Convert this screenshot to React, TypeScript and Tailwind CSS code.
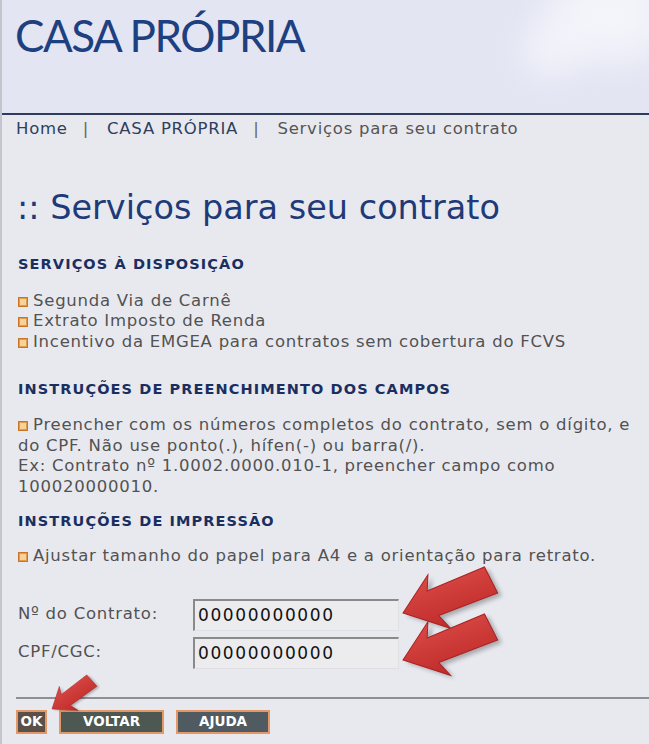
import React from "react";

function Bullet() {
  return (
    <span className="inline-block w-[10px] h-[10px] mr-[5px] align-[-1px] relative bg-[#e39a45] border border-[#c9762a]">
      <span className="absolute left-[1px] top-[1px] w-[3px] h-[3px] bg-[#f6d39c]" />
      <span className="absolute right-[1px] top-[1px] w-[3px] h-[3px] bg-[#f6d39c]" />
      <span className="absolute left-[1px] bottom-[1px] w-[3px] h-[3px] bg-[#f6d39c]" />
      <span className="absolute right-[1px] bottom-[1px] w-[3px] h-[3px] bg-[#f6d39c]" />
    </span>
  );
}

function Arrow({ x, y, angle, scale = 1 }: { x: number; y: number; angle: number; scale?: number }) {
  const pts = "0,0 36,-28 30,-13 92,-17 96,12 33,14 40,30";
  return (
    <g transform={`translate(${x} ${y}) rotate(${angle}) scale(${scale})`}>
      <polygon points={pts} fill="#000" opacity="0.28" transform="translate(3 4)" filter="url(#blur)" />
      <polygon points={pts} fill="url(#redgrad)" stroke="#a92222" strokeWidth="1" />
    </g>
  );
}

const h2 = "text-[14.5px] leading-[18px] font-bold tracking-[1.1px] text-[#1a2f60]";

export default function App() {
  return (
    <div className="relative w-[649px] h-[744px] overflow-hidden bg-[#e8e9ef] border-l-2 border-[#c4c6ce] font-['DejaVu_Sans',sans-serif]">
      {/* header */}
      <div className="relative h-[113px] bg-[#e3e5f3] overflow-hidden">
        <div className="absolute right-[-20px] top-[-30px] w-[120px] h-[90px] rounded-full bg-white opacity-60 blur-[18px]" />
        <div className="absolute right-[70px] top-[20px] w-[60px] h-[60px] rounded-full bg-white opacity-40 blur-[14px]" />
        <div className="relative pl-[13px] pt-[10px] font-['Lato',sans-serif] text-[44px] leading-[50px] text-[#1e3f80] tracking-[-1.5px]">
          CASA PRÓPRIA
        </div>
      </div>
      <div className="h-[2px] bg-[#2f3c5e]" />

      <div className="text-[16.5px] leading-[20.5px] tracking-[0.75px] text-[#525252]">
        {/* breadcrumb */}
        <div className="pl-[14px] pt-[4px] flex text-[#2f3f5e]">
          <span>Home</span>
          <span className="ml-[15px] mr-[18px] text-[#666]">|</span>
          <span>CASA PRÓPRIA</span>
          <span className="ml-[15px] mr-[18px] text-[#666]">|</span>
          <span className="text-[#555]">Serviços para seu contrato</span>
        </div>
        {/* title */}
        <h1 className="pl-[15px] mt-[49px] text-[33.5px] leading-[38px] tracking-normal text-[#1e3a78]">:: Serviços para seu contrato</h1>

        <div className="pl-[16px] pr-[14px]">
          <h2 className={`mt-[28px] ${h2}`}>SERVIÇOS À DISPOSIÇÃO</h2>
          <div className="mt-[18px]">
            <div><Bullet />Segunda Via de Carnê</div>
            <div><Bullet />Extrato Imposto de Renda</div>
            <div><Bullet />Incentivo da EMGEA para contratos sem cobertura do FCVS</div>
          </div>

          <h2 className={`mt-[28px] ${h2}`}>INSTRUÇÕES DE PREENCHIMENTO DOS CAMPOS</h2>
          <p className="mt-[17px]">
            <Bullet />Preencher com os números completos do contrato, sem o dígito, e do CPF. Não use ponto(.), hífen(-) ou barra(/).
            <br />
            Ex: Contrato nº 1.0002.0000.010-1, preencher campo como 100020000010.
          </p>

          <h2 className={`mt-[15px] ${h2}`}>INSTRUÇÕES DE IMPRESSÃO</h2>
          <p className="mt-[16px]"><Bullet />Ajustar tamanho do papel para A4 e a orientação para retrato.</p>

          {/* form */}
          <div className="mt-[32px] flex flex-col gap-[6px]">
            <div className="flex items-center">
              <span className="w-[175px]">Nº do Contrato:</span>
              <div className="w-[206px] h-[32px] bg-[#ececef] border-t-[2px] border-l-[2px] border-[#8a8a8a] border-r border-b border-r-[#e0e0e4] border-b-[#e0e0e4] flex items-center pl-[3px] text-[17px] tracking-[1.6px] text-[#111]">
                00000000000
              </div>
            </div>
            <div className="flex items-center">
              <span className="w-[175px]">CPF/CGC:</span>
              <div className="w-[206px] h-[32px] bg-[#ececef] border-t-[2px] border-l-[2px] border-[#8a8a8a] border-r border-b border-r-[#e0e0e4] border-b-[#e0e0e4] flex items-center pl-[3px] text-[17px] tracking-[1.6px] text-[#111]">
                00000000000
              </div>
            </div>
          </div>
        </div>
      </div>

      <div className="ml-[14px] mt-[28px] h-[2px] bg-[#8d8f96]" />

      <div className="ml-[14px] mt-[11px] flex gap-[12px] font-bold text-[13.5px] text-white">
        <div className="h-[24px] w-[31px] flex items-center justify-center bg-[#5b5048] border-2 border-[#e49868]">OK</div>
        <div className="h-[24px] w-[105px] flex items-center justify-center bg-[#4d5852] border-2 border-[#e49868]">VOLTAR</div>
        <div className="h-[24px] w-[94px] flex items-center justify-center bg-[#4f5b61] border-2 border-[#e49868]">AJUDA</div>
      </div>

      {/* annotation arrows */}
      <svg className="absolute left-0 top-0 pointer-events-none" width="649" height="744">
        <defs>
          <linearGradient id="redgrad" x1="0" y1="0" x2="0" y2="1">
            <stop offset="0" stopColor="#d94a45" />
            <stop offset="1" stopColor="#bf2a2a" />
          </linearGradient>
          <filter id="blur"><feGaussianBlur stdDeviation="2" /></filter>
        </defs>
        <Arrow x={401} y={613} angle={-19} />
        <Arrow x={401} y={660} angle={-19} />
        <Arrow x={50} y={709} angle={-34} scale={0.52} />
      </svg>
    </div>
  );
}
